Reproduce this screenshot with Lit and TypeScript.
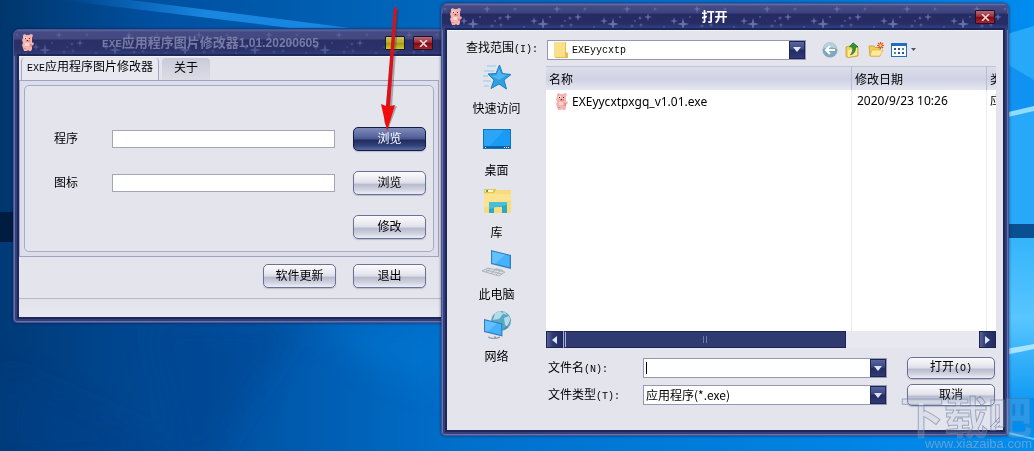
import { LitElement, html, svg, css } from "lit";
import { customElement, property } from "lit/decorators.js";

const pig = html`<svg class="pig" viewBox="0 0 12 17" width="12" height="17" aria-hidden="true">
  <path fill="#f4b3ae" d="M1 1l2-1 1 1h3l2-1 2 1-1 3v5l1-1 1 2-2 2v3l-1 2H7l-1-1-1 1H2l-1-3-1-3 1-2-1-3 1-2z"/>
  <path fill="#fcd5cf" d="M2 3h3v2H2zM3 9h4v3H3z"/>
  <path fill="#e58d8c" d="M4 6h4v2H4zM8 10h2v3H8zM2 14h2v1H2z"/>
  <path fill="#5a2430" d="M3 4h1v1H3zM7 4h1v1H7zM5 6h1v1H5z"/>
</svg>`;

const star = (x: number, y: number, r: number) =>
  svg`<path transform="translate(${x} ${y}) scale(${r})" d="M0-1L.2-.2 1 0 .2.2 0 1-.2.2-1 0-.2-.2z"/>`;

/** Framed, skinned window with a starry caption bar. */
@customElement("skin-window")
export class SkinWindow extends LitElement {
  @property({ type: Boolean, reflect: true }) inactive = false;
  @property({ type: Boolean }) minimizable = false;

  static styles = css`
    :host {
      display: block;
      box-sizing: border-box;
      border: 1px solid #4a5590;
      border-radius: 6px 6px 4px 4px;
      background: #323f7c;
      box-shadow: inset 0 0 0 1px #6674ae, 0 0 3px rgba(0, 10, 50, 0.6);
      overflow: hidden;
    }
    .caption {
      position: relative;
      display: flex;
      align-items: center;
      height: 26px;
      padding: 0 13px 0 8px;
      background: linear-gradient(#6c73a8 0, #464b85 2px, #44488282 9px, #272b62 10px, #262c64 19px, #35468a 26px);
    }
    :host([inactive]) .caption {
      background: linear-gradient(#5b659e 0, #454a84 2px, #44487f 9px, #2b2f66 10px, #2b3068 19px, #34427f 26px);
    }
    .sky {
      position: absolute;
      inset: 0;
      width: 100%;
      height: 100%;
    }
    :host([inactive]) .sky {
      opacity: 0.6;
    }
    .icon {
      position: relative;
      display: flex;
      margin-top: -1px;
    }
    h1 {
      position: relative;
      flex: 1;
      margin: 0;
      text-align: center;
      font: bold 13px/20px "Liberation Sans", "Noto Sans CJK SC", sans-serif;
      color: #fff;
      white-space: nowrap;
    }
    :host([inactive]) h1 {
      padding-left: 10px;
      color: #757ba6;
    }
    .box {
      position: relative;
      width: 20px;
      height: 14px;
      padding: 0;
      margin: 0 0 0 8px;
      border: 1px solid #1a1530;
      border-radius: 1px;
      display: flex;
      align-items: center;
      justify-content: center;
    }
    .close {
      background: linear-gradient(#b86a72, #9e2d38 45%, #7a0c18 50%, #b02028);
    }
    .min {
      background: linear-gradient(#c9c368, #b9ae2a 45%, #a39612 50%, #d2c72c);
    }
    .body {
      margin: 0 5px 5px;
      background: #e4e4ec;
      box-shadow: 0 0 0 2px #1f2658;
      border-top: 1px solid #f1f1f8;
      position: relative;
    }
  `;

  render() {
    return html`
      <header class="caption">
        <svg class="sky" aria-hidden="true">
          <defs>
            <pattern id="stars" width="70" height="28" patternUnits="userSpaceOnUse">
              <g fill="#6770ac">
                ${star(22, 17, 4)}${star(31, 20, 6)}${star(45, 5, 4)}${star(66, 13, 4)}${star(3, 5, 2)}
              </g>
              <g fill="#4c5698">
                <circle cx="50" cy="22" r="1.5" /><circle cx="53" cy="17" r="1" />
                <circle cx="58" cy="14" r="1.5" /><circle cx="59" cy="21" r="1.5" />
                <circle cx="12" cy="23" r="1" /><circle cx="38" cy="13" r="1" />
              </g>
            </pattern>
          </defs>
          <rect width="100%" height="100%" fill="url(#stars)" />
        </svg>
        <span class="icon">${pig}</span>
        <h1><slot name="title"></slot></h1>
        ${this.minimizable ? html`<button class="box min" aria-label="最小化"></button>` : null}
        <button class="box close" aria-label="关闭">
          <svg width="9" height="7" viewBox="0 0 9 7"><path d="M1 0l7 7M8 0L1 7" stroke="#eed8dc" stroke-width="1.6" /></svg>
        </button>
      </header>
      <div class="body"><slot></slot></div>
    `;
  }
}

const monitor = svg`
  <path fill="#2e7fc0" d="M0 0l20 5v14L0 14z"/>
  <path fill="#45b2fb" d="M1.200 1.500l17.500 4.300v11.500L1.200 13z"/>
  <path fill="#7accff" d="M1.200 1.500l13 3.200L4 13.700l-2.800-.7z" opacity=".6"/>`;

const places = [
  {
    name: "快速访问",
    icon: html`<svg width="30" height="30" viewBox="0 0 30 30"><path fill="#2f9fe4" stroke="#1c7fc4" d="M17.500 3l3 8.500 8.500 1-7 5.500 2.500 9-7.500-5-8 4.500 3-8.500-6-6 8-.5z"/><path fill="#6cc8f8" d="M17 6l2 6 6 1-8 5-8-4 6-1z" opacity=".55"/><path stroke="#8fc8ec" stroke-width="1.200" d="M5 4h9M2 9h10M1 14h5M1 19h8M2 24h5"/></svg>`,
  },
  {
    name: "桌面",
    icon: html`<svg width="30" height="30" viewBox="0 0 30 30"><path fill="#1273b8" d="M1 5h28v20H1z"/><path fill="#189af5" d="M2 6h26v16H2z"/><path fill="#3badfb" d="M2 6h20L8 22H2z" opacity=".6"/><path fill="#0d5d9e" d="M2 22.500h26V24H2z"/><path fill="#fff" d="M3 23h1v1H3zM22 23h1v1h-1zM24 23h1v1h-1zM26 23h1v1h-1z"/></svg>`,
  },
  {
    name: "库",
    icon: html`<svg width="30" height="30" viewBox="0 0 30 30"><path fill="#e8c552" d="M2 3h12v5H2z"/><path fill="#fff6cf" d="M3 4h8v2H3z"/><path fill="#54a556" d="M4 4h2v2H4z"/><path fill="#f8dc7c" d="M2 7h10l2-3h15v23H2z"/><path fill="#fbe79b" d="M2 8h27v6L2 22z" opacity=".7"/><path fill="#2aa9c9" d="M7 16h18v11h-5v-6h-8v6H7z"/><path fill="#57c8dc" d="M7 16h18v3L7 23z" opacity=".7"/></svg>`,
  },
  {
    name: "此电脑",
    icon: html`<svg width="30" height="30" viewBox="0 0 30 30"><g transform="translate(9 2)">${monitor}</g><path fill="#b9c2cb" d="M14 20l8 2-4 2-6-2z"/><path fill="#d9dee3" stroke="#98a2ac" stroke-width=".7" d="M6 20l17 4-6 4L0 23z"/><path stroke="#9aa5af" stroke-width=".7" d="M4 22l16 4M8 21l-4 3M13 22l-4 4M18 23l-4 4"/></svg>`,
  },
  {
    name: "网络",
    icon: html`<svg width="30" height="30" viewBox="0 0 30 30"><circle cx="19" cy="11" r="10" fill="#5aa7c4"/><path fill="#b5dbe6" d="M13 3l5-2 3 3-4 5-6 1zM22 8l5-2 2 6-3 5-3-2zM19 3l4-1 2 3z"/><path fill="#3a7f9c" d="M25 18c3-3 4-6 4-10l-3 7-6 5z" opacity=".7"/><g transform="translate(2 9) scale(.92)">${monitor}</g><path fill="none" stroke="#8b9aa6" stroke-width="1.200" d="M13 26v2M6 27c4 2 8 2 12 0"/></svg>`,
  },
];

const toolIcons = [
  {
    label: "返回",
    icon: html`<svg width="16" height="16" viewBox="0 0 16 16"><circle cx="8" cy="8" r="7.500" fill="#7fa7bd"/><path fill="#b4cfde" d="M1 7a7 7 0 0 1 14 0c-4-2-10-2-14 0z"/><path fill="none" stroke="#fff" stroke-width="2" d="M13 8H4M8 4L4 8l4 4"/></svg>`,
  },
  {
    label: "向上一级",
    icon: html`<svg width="16" height="16" viewBox="0 0 16 16"><path fill="#f0cf5a" stroke="#c79a2c" stroke-width=".8" d="M1 5l4-1 1 1h7v9l-10 1.500-2-1z"/><path fill="#fdeb9b" d="M3 8l9-2v7l-9 2z"/><path fill="#2f9a35" stroke="#176a1f" stroke-width=".7" d="M8 .8l5 4h-2.500c0 5-1.500 7-5 8 2-2 2.500-4.500 2.200-8H4.500z"/></svg>`,
  },
  {
    label: "新建文件夹",
    icon: html`<svg width="16" height="16" viewBox="0 0 16 16"><path fill="#f0cf5a" stroke="#c79a2c" stroke-width=".8" d="M1 4h5l1 1.500h5V14H2z"/><path fill="#fdeb9b" stroke="#d6a93a" stroke-width=".6" d="M4 8h11l-3 6H2z"/><path stroke="#dd5526" stroke-width="1.200" d="M12.500 0v7M9 3.500h7M10 1l5 5M15 1l-5 5"/><circle cx="12.500" cy="3.500" r="1.200" fill="#ffdf70"/></svg>`,
  },
  {
    label: "查看",
    icon: html`<svg width="16" height="16" viewBox="0 0 16 16"><path fill="#1e6fbe" d="M0 1h16v14H0z"/><path fill="#f8fbff" d="M1 4h14v10H1z"/><path fill="#3c4e88" d="M3 6h2v2H3zM7 6h2v2H7z"/><path fill="#3aa05a" d="M11 6h2v2h-2zM3 10h2v2H3z"/><path fill="#3c4e88" d="M7 10h2v2H7zM11 10h2v2h-2z"/></svg>`,
  },
];

const arrowDown = html`<svg width="8" height="5" viewBox="0 0 8 5"><path fill="#dfe3f4" d="M0 0h8L4 5z"/></svg>`;
const folder = html`<svg width="14" height="16" viewBox="0 0 14 16" aria-hidden="true"><path fill="#e6bd4e" d="M1 0h11v10l2 1v5H1z"/><path fill="#fbe08a" d="M0 0h11v15H0z"/></svg>`;

@customElement("app-root")
export class AppRoot extends LitElement {
  static styles = css`
    :host {
      display: block;
      position: relative;
      min-height: 100vh;
      overflow: hidden;
      font: 12px/16px "Noto Sans CJK SC", sans-serif;
      color: #000;
      background: #0064bd;
    }
    .wallpaper {
      position: absolute;
      inset: 0;
      width: 100%;
      height: 100%;
    }
    .main {
      position: absolute;
      left: 13px;
      top: 29px;
      width: 434px;
    }
    .dialog {
      position: absolute;
      left: 441px;
      right: 25px;
      top: 3px;
    }
    .latin {
      font: 10px/16px "Liberation Mono", monospace;
    }
    .caption-latin {
      font: bold 11px/20px "Liberation Mono", monospace;
    }
    .caption-digits {
      font-size: 12px;
    }
    button {
      font: inherit;
      color: inherit;
    }
    .btn {
      height: 24px;
      padding: 0 0 2px;
      border: 1px solid #6b7096;
      border-radius: 5px;
      background: linear-gradient(#fbfbfd, #e6e6ee 40%, #dcdde7 50%, #b8bbce 56%, #d0d2e0 80%, #eeeef5);
      box-shadow: 0 1px 1px #b9bccd;
    }
    .btn.active {
      color: #fff;
      border-color: #141b42;
      background: linear-gradient(#7f8cba, #56659c 40%, #45548c 50%, #1f2b60 56%, #33427a 80%, #5a6ba4);
    }

    .tabs {
      display: flex;
      align-items: end;
      gap: 3px;
      height: 23px;
      padding-left: 2px;
    }
    .tab {
      height: 22px;
      padding: 0 12px 4px;
      border: 0;
      border-radius: 4px 4px 0 0;
      background: linear-gradient(#c9cbda, #dcdce6);
    }
    .tab.current {
      padding: 0 5px 5px;
      background: #e8e8f0;
      border-left: 1px solid #a5a8c2;
      border-right: 1px solid #a5a8c2;
    }
    .panel {
      margin-right: 2px;
      padding: 4px;
      border: 1px solid #a0a3bf;
      background: #dddeea;
    }
    .group {
      display: grid;
      grid-template-columns: 58px 1fr 73px;
      align-items: center;
      row-gap: 20px;
      padding: 41px 7px 12px 29px;
      border: 1px solid #a9abc6;
      border-radius: 5px;
      background: #e4e4ec;
    }
    .group label {
      padding-bottom: 2px;
    }
    input,
    select {
      box-sizing: border-box;
      min-width: 0;
      margin: 0;
      font: inherit;
      color: inherit;
      border: 0;
      border-radius: 0;
      background: #fff;
    }
    .group input {
      height: 18px;
      margin-right: 18px;
      border: 1px solid #a3a5b9;
    }
    .group .last {
      grid-column: 3;
    }
    .actions {
      display: flex;
      justify-content: end;
      gap: 17px;
      padding: 7px 15px 10px;
      border-bottom: 1px solid #b6b8c8;
    }
    .actions .btn {
      width: 73px;
    }
    .status {
      height: 18px;
      background: linear-gradient(#e2e2ea, #e9e9f0);
    }

    .content {
      display: grid;
      grid-template-columns: 99px 1fr;
      grid-template-rows: 20px auto auto auto;
      padding: 8px 7px 24px 0;
    }
    .places {
      grid-column: 1;
      grid-row: 1 / 5;
      display: flex;
      flex-direction: column;
      gap: 8px;
      padding-top: 23px;
    }
    .place {
      display: flex;
      flex-direction: column;
      align-items: center;
      gap: 8px;
      padding: 0;
      border: 0;
      background: none;
    }
    .place svg {
      display: block;
    }
    .lookin {
      grid-column: 1 / 3;
      grid-row: 1;
      display: grid;
      grid-template-columns: 81px 259px 1fr;
      align-items: center;
      padding-left: 19px;
    }
    .lookin label {
      padding-bottom: 2px;
    }
    .combo {
      display: flex;
      align-items: center;
      box-sizing: border-box;
      height: 20px;
      border: 1px solid #9698b2;
      background: #fff;
    }
    .combo svg {
      flex: none;
    }
    .combo input,
    .combo select {
      flex: 1;
      height: 100%;
      padding: 0 0 0 2px;
      appearance: none;
      outline: none;
    }
    .combo .folder {
      display: flex;
      padding: 0 2px 0 6px;
    }
    .combo select.mono {
      padding-top: 2px;
      font: 10px/16px "Liberation Mono", monospace;
    }
    .caret {
      width: 1px;
      height: 12px;
      margin-left: 2px;
      background: #000;
    }
    .drop {
      display: flex;
      align-items: center;
      justify-content: center;
      align-self: stretch;
      width: 16px;
      padding: 0;
      border: 1px solid #1c2554;
      background: linear-gradient(#58669f, #3a4780 45%, #222c62 50%, #2e3a74);
    }
    .tools {
      display: flex;
      align-items: center;
      gap: 7px;
      padding-left: 16px;
    }
    .tools button {
      display: flex;
      padding: 0;
      border: 0;
      background: none;
    }
    .more {
      margin-left: -3px;
    }
    .list {
      grid-column: 2;
      margin-top: 7px;
      background: #fff;
    }
    table {
      width: 100%;
      table-layout: fixed;
      border-collapse: separate;
      border-spacing: 0;
    }
    th,
    td {
      box-sizing: border-box;
      padding: 0 0 0 3px;
      overflow: hidden;
      white-space: nowrap;
      text-align: left;
      font-weight: normal;
    }
    th {
      height: 24px;
      border-right: 1px solid #b9bccf;
      border-top: 1px solid #c3c5d6;
      background: linear-gradient(#dcdeeb, #cfd2e4 55%, #e6e7f1);
    }
    td {
      height: 241px;
      padding-top: 3px;
      vertical-align: top;
      font: 12px/16px "Noto Sans", "Noto Sans CJK SC", sans-serif;
      border-right: 1px solid #ececf2;
    }
    th:last-child,
    td:last-child {
      border-right: 0;
    }
    td:nth-child(2) {
      padding-left: 5px;
    }
    .c2 {
      width: 135px;
    }
    .c3 {
      width: 9px;
    }
    .file {
      display: flex;
      align-items: center;
      gap: 4px;
      padding-left: 7px;
    }
    .scroll {
      grid-column: 2;
      display: flex;
      height: 17px;
      background: #e8e8f0;
    }
    .scroll button {
      display: flex;
      align-items: center;
      justify-content: center;
      width: 17px;
      padding: 0;
      border: 1px solid #1c2554;
      background: linear-gradient(90deg, #55629a, #2c3870 40%, #222c62);
    }
    .track {
      flex: 1;
    }
    .thumb {
      display: flex;
      align-items: center;
      justify-content: center;
      box-sizing: border-box;
      width: 68%;
      height: 100%;
      border: 1px solid #1c2554;
      border-left: 3px double #a9b0d2;
      background: #2e3a70;
    }
    .grip {
      width: 2px;
      height: 7px;
      border: solid #6d78a8;
      border-width: 0 1px;
    }
    .fields {
      grid-column: 2;
      display: grid;
      grid-template-columns: 97px 1fr 88px;
      align-items: center;
      row-gap: 5px;
      padding: 9px 1px 0 0;
    }
    .fields .combo {
      margin-right: 20px;
    }
    .fields .btn {
      height: 22px;
    }
    .fields label {
      padding-left: 2px;
    }
    .gripper {
      position: absolute;
      right: 3px;
      bottom: 3px;
    }

    .arrow {
      position: absolute;
      left: 376px;
      top: 6px;
      pointer-events: none;
    }
    .watermark {
      position: absolute;
      right: 2px;
      bottom: 0;
      text-align: right;
      pointer-events: none;
    }
    .brand {
      font: bold 44px/44px "Noto Sans CJK SC", sans-serif;
      color: rgba(190, 205, 225, 0.2);
      -webkit-text-stroke: 1px rgba(110, 130, 165, 0.6);
    }
    .site {
      font: 13px/14px "Liberation Sans", sans-serif;
      color: rgba(125, 165, 205, 0.8);
    }
  `;

  render() {
    return html`
      <svg class="wallpaper" viewBox="0 0 1034 451" preserveAspectRatio="none" aria-hidden="true">
        <defs>
          <linearGradient id="sky">
            <stop offset="0" stop-color="#00366c" /><stop offset=".15" stop-color="#0050a0" />
            <stop offset=".4" stop-color="#0066bb" /><stop offset=".75" stop-color="#0074d2" />
            <stop offset="1" stop-color="#008cf0" />
          </linearGradient>
          <linearGradient id="beam">
            <stop offset="0" stop-color="#0a6cc4" stop-opacity="0" /><stop offset=".5" stop-color="#1a86e0" />
            <stop offset="1" stop-color="#1687e0" />
          </linearGradient>
          <linearGradient id="floor">
            <stop offset="0" stop-color="#003a78" /><stop offset=".2" stop-color="#004f9e" />
            <stop offset=".45" stop-color="#0070cc" /><stop offset="1" stop-color="#008ef0" />
          </linearGradient>
          <linearGradient id="pane" x2="0" y2="1">
            <stop offset="0" stop-color="#35b4fb" /><stop offset=".5" stop-color="#58c6ff" /><stop offset="1" stop-color="#139bf4" />
          </linearGradient>
          <filter id="soft"><feGaussianBlur stdDeviation="14" /></filter>
        </defs>
        <path fill="url(#sky)" d="M0 0h1034v451H0z" />
        <path fill="url(#beam)" d="M60 0h70L350 28H290z" />
        <path fill="url(#floor)" d="M0 240h1034v211H0z" />
        <path fill="#001c40" d="M0 212h20v30H0z" />
        <g filter="url(#soft)">
          <path fill="#00418a" opacity=".4" d="M0 370L200 460H0zM150 322h150l-90 140h-30z" />
          <path fill="#0a86e4" opacity=".3" d="M320 322h121v70L360 360z" />
        </g>
        <path fill="#27a8f8" d="M1000 36l34-10v200h-34z" />
        <path fill="#0f92f2" d="M1000 60l34 20v30l-34 10z" />
        <path fill="#8fdcff" d="M1000 114l34-8v5l-34 8z" />
        <path fill="#0a4f92" d="M1000 224h34v14h-34z" />
        <path fill="url(#pane)" d="M1000 238h34v160h-34z" />
        <path fill="#a6e4ff" d="M1000 350l34-6v5l-34 7z" />
        <path fill="#5cc0fa" d="M1000 430l34 8v2l-34-8z" />
      </svg>

      <skin-window class="main" inactive minimizable>
        <span slot="title"><span class="caption-latin">EXE</span>应用程序图片修改器<span class="caption-digits">1.01.20200605</span></span>
        <div class="tabs" role="tablist">
          <button class="tab current" role="tab" aria-selected="true"><span class="latin">EXE</span>应用程序图片修改器</button>
          <button class="tab" role="tab">关于</button>
        </div>
        <div class="panel">
          <div class="group">
            <label for="program">程序</label>
            <input id="program" type="text" />
            <button class="btn active">浏览</button>
            <label for="picture">图标</label>
            <input id="picture" type="text" />
            <button class="btn">浏览</button>
            <button class="btn last">修改</button>
          </div>
        </div>
        <div class="actions">
          <button class="btn">软件更新</button>
          <button class="btn">退出</button>
        </div>
        <div class="status"></div>
      </skin-window>

      <svg class="arrow" width="30" height="130" viewBox="0 0 30 130" aria-hidden="true">
        <path fill="#333" opacity=".35" d="M20 3l3 1-7 97 5-1-9 24-4-8z" />
        <path fill="#d8121b" d="M18 1l3 1-7 98h-4z" />
        <path fill="#f00c0c" d="M5 98l5 2h4l5-1-8 26z" />
      </svg>

      <skin-window class="dialog">
        <span slot="title">打开</span>
        <div class="content">
          <div class="lookin">
            <label for="lookin">查找范围<span class="latin">(I):</span></label>
            <div class="combo">
              <span class="folder">${folder}</span>
              <select id="lookin" class="mono"><option>EXEyycxtp</option></select>
              <button class="drop" tabindex="-1" aria-label="展开">${arrowDown}</button>
            </div>
            <div class="tools">
              ${toolIcons.map((t) => html`<button aria-label=${t.label}>${t.icon}</button>`)}
              <svg class="more" width="5" height="3" viewBox="0 0 5 3"><path fill="#555" d="M0 0h5L2.500 3z" /></svg>
            </div>
          </div>
          <nav class="places">
            ${places.map((p) => html`<button class="place">${p.icon}<span>${p.name}</span></button>`)}
          </nav>
          <div class="list">
            <table>
              <thead>
                <tr><th>名称</th><th class="c2">修改日期</th><th class="c3">类型</th></tr>
              </thead>
              <tbody>
                <tr>
                  <td><span class="file">${pig}EXEyycxtpxgq_v1.01.exe</span></td>
                  <td>2020/9/23 10:26</td>
                  <td>应用程序</td>
                </tr>
              </tbody>
            </table>
          </div>
          <div class="scroll">
            <button aria-label="向左"><svg width="5" height="8" viewBox="0 0 5 8"><path fill="#dfe3f4" d="M5 0v8L0 4z" /></svg></button>
            <div class="track"><div class="thumb"><span class="grip"></span></div></div>
            <button aria-label="向右"><svg width="5" height="8" viewBox="0 0 5 8"><path fill="#dfe3f4" d="M0 0v8l5-4z" /></svg></button>
          </div>
          <div class="fields">
            <label for="filename">文件名<span class="latin">(N):</span></label>
            <div class="combo">
              <span class="caret"></span>
              <input id="filename" type="text" />
              <button class="drop" tabindex="-1" aria-label="展开">${arrowDown}</button>
            </div>
            <button class="btn">打开<span class="latin">(O)</span></button>
            <label for="filetype">文件类型<span class="latin">(T):</span></label>
            <div class="combo">
              <select id="filetype"><option>应用程序(*.exe)</option></select>
              <button class="drop" tabindex="-1" aria-label="展开">${arrowDown}</button>
            </div>
            <button class="btn">取消</button>
          </div>
          <svg class="gripper" width="10" height="10" viewBox="0 0 10 10" aria-hidden="true">
            <path stroke="#8f93ad" d="M0 10L10 0M4 10l6-6M8 10l2-2" />
          </svg>
        </div>
      </skin-window>

      <div class="watermark">
        <div class="brand">下载吧</div>
        <div class="site">www.xiazaiba.com</div>
      </div>
    `;
  }
}
